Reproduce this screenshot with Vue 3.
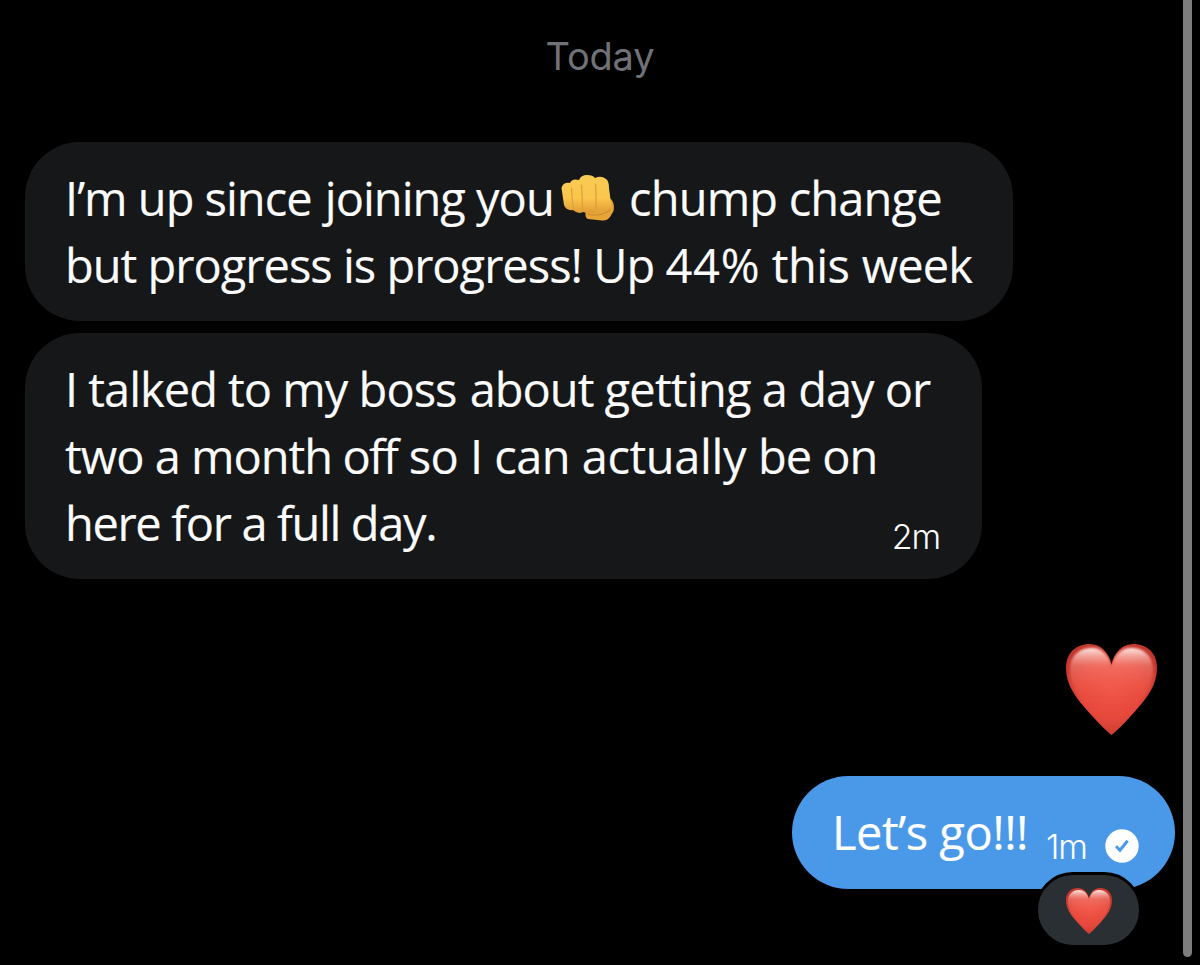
<script setup>
const heart = 'M50 100C47 98 38 89 26 76C10 58 0 45 0 26C0 10 11 0 26 0C38 0 47 9 50 23C53 9 62 0 74 0C89 0 100 10 100 26C100 45 90 58 74 76C62 89 53 98 50 100Z'
</script>

<template>
  <main class="chat">
    <svg class="defs" width="0" height="0" aria-hidden="true">
      <defs>
        <radialGradient id="heartFill" cx=".5" cy=".5" r=".6">
          <stop offset="0" stop-color="#ee5447" />
          <stop offset=".55" stop-color="#e5483c" />
          <stop offset="1" stop-color="#bf352b" />
        </radialGradient>
        <linearGradient id="heartShine" x1="0" y1="0" x2="0" y2="1">
          <stop offset="0" stop-color="#fff2ee" stop-opacity=".95" />
          <stop offset=".07" stop-color="#ffd9d2" stop-opacity=".75" />
          <stop offset=".22" stop-color="#fb8d80" stop-opacity=".5" />
          <stop offset=".5" stop-color="#f4604f" stop-opacity=".35" />
          <stop offset=".85" stop-color="#f0402f" stop-opacity="0" />
        </linearGradient>
        <linearGradient id="fistFill" x1="0" y1="0" x2="0" y2="1">
          <stop offset="0" stop-color="#f9cb55" />
          <stop offset=".6" stop-color="#fac64b" />
          <stop offset="1" stop-color="#e09a35" />
        </linearGradient>
        <filter id="soft" x="-10%" y="-10%" width="120%" height="120%"><feGaussianBlur stdDeviation="1.1" /></filter>
        <symbol id="heart" viewBox="0 0 100 100">
          <path :d="heart" fill="url(#heartFill)" />
          <path :d="heart" fill="url(#heartShine)" transform="translate(4.500 4.500) scale(.91)" filter="url(#soft)" />
        </symbol>
      </defs>
    </svg>

    <div class="date">Today</div>

    <section class="incoming">
      <div class="bubble b1">
        <div class="line"><span class="l1a">I’m up since <span class="joining">joining</span> <span class="you">you</span></span><svg class="fist" viewBox="0 0 54 46">
          <path d="M24 32L50 24Q54 29 52.500 36L49 42Q46 46 41 45.500L27 44Q24 43 24.500 38Z" fill="#e7a437" />
          <path d="M.5 13Q2 7 9 8Q11 3 18 5Q20 0 26 0Q32 0 34 3Q40 0 45 4Q48 6 48 13L50 28Q50 35 44 35.500Q39 36.500 36 35Q34 39 28 38.500L22 37Q17 39.500 12 35Q5 36 3 30Z" fill="url(#fistFill)" />
          <path d="M10.500 13Q11 25 12.500 34M20.500 10Q21.500 25 21.500 36M34.500 9Q35.500 23 35 34" fill="none" stroke="#dba03c" stroke-width="1.2" stroke-linecap="round" />
          <path d="M27 39.500Q40 42 49 35" fill="none" stroke="#c98a30" stroke-width="1" />
        </svg><span class="l1b">chump change</span></div>
        <div class="line">but progress is progress! Up <span class="pct">44%</span> <span class="this">this</span> <span class="week">week</span></div>
      </div>
      <div class="bubble b2">
        <div class="line">I talked to my boss <span class="about">about</span> <span class="getting">getting</span> a day or</div>
        <div class="line">two a month<span class="off"> off</span><span class="so"> so I can </span><span class="actually">actually </span>be on</div>
        <div class="line last"><span>here for a full day.</span><time class="time">2m</time></div>
      </div>
    </section>

    <svg class="big-heart"><use href="#heart" /></svg>

    <div class="bubble sent">
      <span class="go">Let’s go!!!</span>
      <time class="time sent-time">1m</time>
      <svg class="check" viewBox="0 0 34 34">
        <circle cx="17" cy="17" r="16.700" fill="#fff" />
        <path d="M11 17.300L15 21.300L22.600 11.800" fill="none" stroke="#4a99e9" stroke-width="3" />
      </svg>
      <div class="reaction"><svg><use href="#heart" /></svg></div>
    </div>
    <div class="scrollbar"></div>
  </main>
</template>

<style>
body { background: #000; overflow: hidden; }
</style>

<style scoped>
.chat { position: relative; box-sizing: border-box; display: flex; flex-direction: column; width: 1200px; height: 965px; overflow: hidden; background: #000; color: #fbfbfb; font-family: "Open Sans", "Noto Sans", sans-serif; }
.defs { position: absolute; }
.date { height: 141.5px; text-align: center; color: #707277; font: 400 38px/113px Inter, sans-serif; letter-spacing: -0.2px; }
.incoming { display: flex; flex-direction: column; align-items: flex-start; gap: 12px; margin-left: 25px; }
.bubble { box-sizing: border-box; background: #161719; border-radius: 55px; padding: 23px 0 0 40px; font-size: 47px; letter-spacing: -1px; }
.b1 { width: 988px; height: 179.5px; }
.b2 { width: 957px; height: 246px; }
.line { height: 67px; line-height: 67px; white-space: pre; -webkit-text-stroke: .15px currentColor; }
.fist { width: 54px; height: 46px; vertical-align: -5px; }
.l1a { display: inline-block; width: 495.5px; }
.joining { margin-left: 2px; }
.you { letter-spacing: -1px; }
.l1b { margin-left: 14.5px; letter-spacing: -.83px; }
.pct { letter-spacing: .8px; }
.this { letter-spacing: -.5px; }
.week { margin-left: 1px; letter-spacing: -.9px; }
.about { margin-left: 2px; }
.getting { letter-spacing: -.8px; }
.off { letter-spacing: -1.8px; }
.so { letter-spacing: -.55px; }
.actually { letter-spacing: -.4px; }
.time { font: 350 34px/40px Inter, sans-serif; letter-spacing: -1.2px; -webkit-text-stroke: 0; }
.last { display: flex; justify-content: space-between; padding-right: 42px; letter-spacing: -1.35px; }
.last .time { margin-top: 27px; }
.big-heart { width: 91px; height: 91px; margin: 65px 0 0 1065.500px; flex: none; }
.sent { position: relative; display: flex; align-items: flex-start; margin: 41px 0 0 792px; width: 383px; height: 113px; border-radius: 56.5px; background: #4a99e9; color: #fff; flex: none; line-height: 67px; }
.go { width: 214px; letter-spacing: -.48px; white-space: nowrap; -webkit-text-stroke: .15px currentColor; }
.sent-time { width: 59px; margin-top: 28px; }
.check { width: 34px; height: 34px; margin-top: 30px; }
.reaction { position: absolute; left: 243px; top: 96px; width: 107px; height: 76px; box-sizing: border-box; border: 3px solid #000; border-radius: 38px; background: #2a2f33; display: flex; justify-content: center; padding-top: 13px; }
.reaction svg { width: 46px; height: 46px; }
.scrollbar { position: absolute; right: 8px; top: -10px; width: 9px; height: 967px; border-radius: 5px; background: #7d7d7d; }
</style>
